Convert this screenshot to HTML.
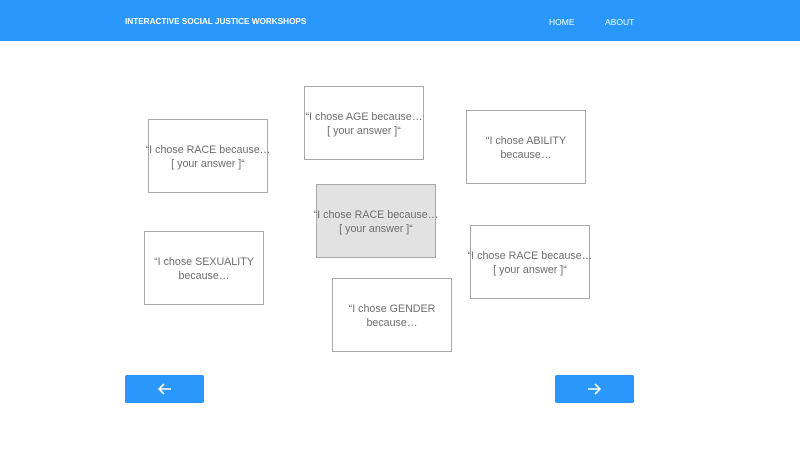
<!DOCTYPE html>
<html><head><style>
body{margin:0;width:800px;height:450px;background:#fff;font-family:"Liberation Sans",sans-serif;position:relative;overflow:hidden}
.hd{position:absolute;left:0;top:0;width:800px;height:41px;background:#2997fb;color:#fff}
.t{position:absolute;left:125px;top:17px;font-size:8.2px;font-weight:bold}
.n{position:absolute;top:17px;font-size:8.5px}
.b{position:absolute;width:118px;height:69px;padding-top:3px;border:1px solid #a9a9a9;box-sizing:content-box;display:flex;align-items:center;justify-content:center;text-align:center;color:#6e6e6e;font-size:10.7px;line-height:13.5px;white-space:nowrap}
.btn{position:absolute;top:375px;width:79px;height:28px;background:#2997fb;border-radius:2px}
</style></head><body>
<div class="hd"><div class="t">INTERACTIVE SOCIAL JUSTICE WORKSHOPS</div><div class="n" style="left:549px">HOME</div><div class="n" style="left:605px">ABOUT</div></div>
<div class="b" style="left:148px;top:119px">“I chose RACE because…<br>[ your answer ]“</div>
<div class="b" style="left:304px;top:86px">“I chose AGE because…<br>[ your answer ]“</div>
<div class="b" style="left:466px;top:110px">“I chose ABILITY<br>because…</div>
<div class="b" style="left:316px;top:184px;background:#e3e2e2">“I chose RACE because…<br>[ your answer ]“</div>
<div class="b" style="left:144px;top:231px">“I chose SEXUALITY<br>because…</div>
<div class="b" style="left:470px;top:225px">“I chose RACE because…<br>[ your answer ]“</div>
<div class="b" style="left:332px;top:278px">“I chose GENDER<br>because…</div>
<div class="btn" style="left:125px"><svg width="79" height="28"><path d="M46 14H34M39 9l-5 5 5 5" stroke="#fff" stroke-width="1.6" fill="none"/></svg></div>
<div class="btn" style="left:555px"><svg width="79" height="28"><path d="M33 14H45M40 9l5 5-5 5" stroke="#fff" stroke-width="1.6" fill="none"/></svg></div>
</body></html>
